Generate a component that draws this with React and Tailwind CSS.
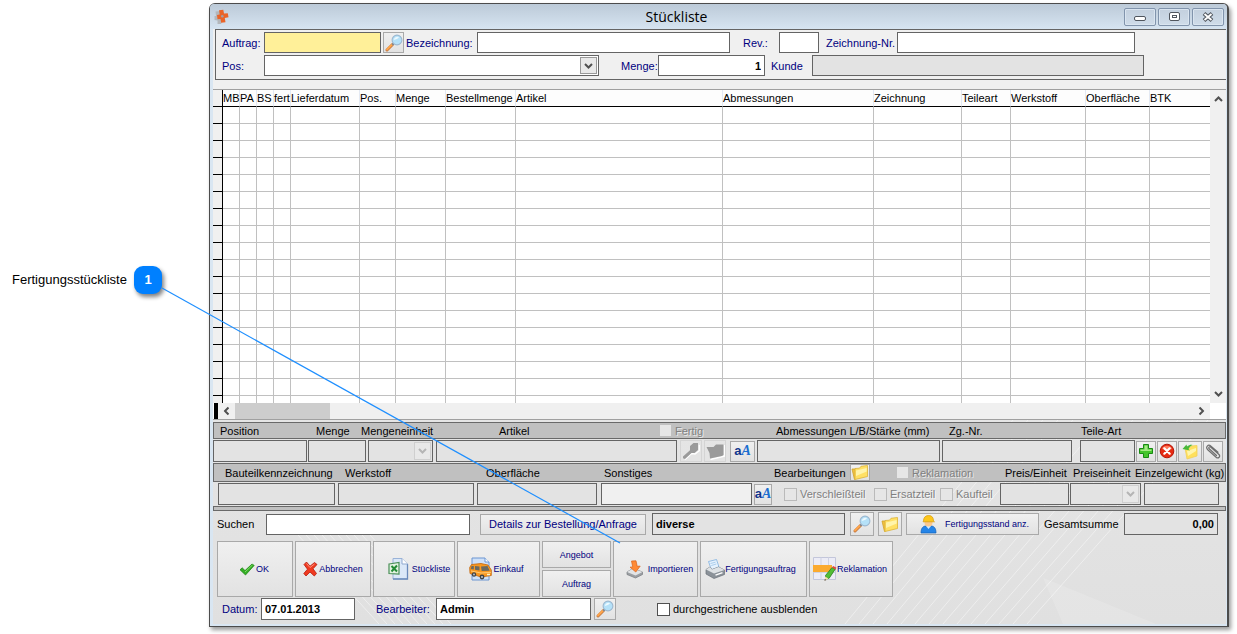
import { useState } from 'react';

const columns = [
  { label: 'MB', width: 'w-[17px]' },
  { label: 'PA', width: 'w-[17px]' },
  { label: 'BS', width: 'w-[17px]' },
  { label: 'fert', width: 'w-[17px]' },
  { label: 'Lieferdatum', width: 'w-[69px]' },
  { label: 'Pos.', width: 'w-[36px]' },
  { label: 'Menge', width: 'w-[50px]' },
  { label: 'Bestellmenge', width: 'w-[70px]' },
  { label: 'Artikel', width: 'w-[207px]' },
  { label: 'Abmessungen', width: 'w-[151px]' },
  { label: 'Zeichnung', width: 'w-[88px]' },
  { label: 'Teileart', width: 'w-[49px]' },
  { label: 'Werkstoff', width: 'w-[75px]' },
  { label: 'Oberfläche', width: 'w-[64px]' },
  { label: 'BTK', width: '' },
];

const rows = Array.from({ length: 17 }, (_, i) => i);

const MagnifierIcon = () => (
  <svg width="18" height="18" viewBox="0 0 18 18" aria-hidden="true">
    <path d="M2 16 7.500 10.500" stroke="#c47a44" strokeWidth="3" strokeLinecap="round" />
    <path d="M2 15.500 7 10.500" stroke="#ffa54a" strokeWidth="1.800" strokeLinecap="round" />
    <path d="m7.200 10.800 1.800-1.800" stroke="#7d8894" strokeWidth="1.800" />
    <circle cx="12" cy="6" r="4.900" fill="#b5e1f8" stroke="#9db8d0" strokeWidth="1.100" />
    <path d="M8.700 6a3.500 3.500 0 0 1 5.300-2.700C13 5 11 5.500 8.700 6Z" fill="#ecf9ff" />
  </svg>
);

const FolderIcon = () => (
  <svg width="18" height="17" viewBox="0 0 18 17" aria-hidden="true">
    <path d="M1 5h3.500L5.500 14l-2 1.500Z" fill="#f0c040" stroke="#d1a32a" strokeWidth=".8" />
    <path d="M4 4.500 8.500 4.200 10 2.300l6.500-.8v11L4 15.500Z" fill="#ffe065" stroke="#dcb238" strokeWidth=".8" />
    <path d="M5 6.500 15.700 4v3.500L5 12Z" fill="#fff4ac" />
  </svg>
);

const PlusIcon = () => (
  <svg width="16" height="16" viewBox="0 0 16 16" aria-hidden="true">
    <path d="M5.500 1.500h5v4h4v5h-4v4h-5v-4h-4v-5h4Z" fill="#45c52c" stroke="#188a12" />
    <path d="M6.500 2.500h3v4h4v1.500h-11V6.500h4Z" fill="#a5ea85" />
  </svg>
);

const DeleteIcon = () => (
  <svg width="16" height="16" viewBox="0 0 16 16" aria-hidden="true">
    <circle cx="8" cy="8" r="6.800" fill="#e62a12" stroke="#b51708" />
    <path d="M3 6a5.500 5.500 0 0 1 10 0C10 7.500 6 7.500 3 6Z" fill="#ff7a5c" />
    <path d="m5.300 5.300 5.400 5.400m0-5.400-5.400 5.400" stroke="#fff" strokeWidth="2.200" strokeLinecap="round" />
  </svg>
);

const ImportFolderIcon = () => (
  <svg width="18" height="17" viewBox="0 0 18 17" aria-hidden="true">
    <path d="M4 5 9 4.500l1-1.500 6-.5v10.500L6 16Z" fill="#ffe05c" stroke="#f0cf5c" strokeWidth=".8" />
    <path d="M6 8 15 5v3L7 13Z" fill="#fff5ac" />
    <path d="M1.500 6 5.500 1.500l.5 2C8 2 10 1.500 11.500 2 9.500 3 8 4.500 7.500 6l1.500 1.500Z" fill="#48b83a" />
  </svg>
);

const ClipIcon = () => (
  <svg width="17" height="17" viewBox="0 0 17 17" fill="none" aria-hidden="true">
    <path d="M11.500 12.500 4.200 5.800C3 4.700 4.500 3 5.900 4.200l7.800 7c2.300 2.200-.3 4.900-2.600 3L3 7C-.1 4 3.200.8 6 3.200l7 6" stroke="#6e6e6e" strokeWidth="1.200" strokeLinecap="round" />
  </svg>
);

const FontIcon = () => (
  <span className="flex items-end leading-4 font-bold" aria-hidden="true">
    <span className="text-[13px] text-[#12358c]">a</span>
    <span className="font-['Liberation_Serif',serif] text-[14px] text-[#1b6fd0] italic">A</span>
  </span>
);

const CheckIcon = () => (
  <svg width="16" height="13" viewBox="0 0 16 13" aria-hidden="true">
    <path d="M1 6.800 3.200 4.800 6 7.600 13 1l2.200 1.400L6.500 12Z" fill="#35ae24" stroke="#16830f" strokeWidth=".7" />
    <path d="m6 9 7.500-7" stroke="#8be070" strokeWidth=".9" />
  </svg>
);

const CrossIcon = () => (
  <svg width="15" height="16" viewBox="0 0 15 16" aria-hidden="true">
    <path d="M3.500 1 7 5.200 11.500 1.500l2.500 2-4 4.300 3.500 4.700-2.200 2.500-4.300-4L3 15 .8 12.500l3.700-4.300L1 3.500Z" fill="#ef3a20" stroke="#b81c0c" strokeWidth=".8" />
    <path d="m3.500 2.500 3.500 4 4.500-3.500" stroke="#ff917c" fill="none" />
  </svg>
);

const SheetIcon = () => (
  <svg width="21" height="24" viewBox="0 0 21 24" aria-hidden="true">
    <path d="M5 1.500h9l5.500 5.500v15H5Z" fill="#dbe8f8" stroke="#9ab3d8" />
    <path d="M19.500 7v15H5" fill="none" stroke="#6a8abb" strokeWidth="1.300" />
    <path d="M14 1.500V7h5.500" fill="#fff" stroke="#8fa9d0" />
    <path d="m1 7 10-1.500v11.500L1 16.500Z" fill="#e2f2e0" stroke="#4a8f57" strokeWidth="1.200" />
    <path d="m3.500 9 5.500 5.500M9 8.500l-5.500 6" stroke="#238b35" strokeWidth="2" />
  </svg>
);

const VanIcon = () => (
  <svg width="23" height="24" viewBox="0 0 23 24" aria-hidden="true">
    <path d="M3 1h13l4 4v18H3Z" fill="#cfe1f8" stroke="#6c96d2" />
    <path d="M16 1v4h4" fill="#fff" stroke="#6c96d2" />
    <path d="M.7 10.500 2.500 7.500 12 6.500l7 1.500 3.300 5v5.500L12 20 1 16.500Z" fill="#f89820" stroke="#c2640a" strokeWidth=".8" />
    <path d="m2.500 9-.7 3 3 .5V9ZM6 9v3.700l4.500.8V9.500ZM12 9.500l.7 4.500 8-.3L18.500 9Z" fill="#6b6a60" />
    <path d="m2 14 10 2 10-.7" stroke="#ffc873" fill="none" />
    <circle cx="5" cy="17.500" r="2.200" fill="#3f4347" />
    <circle cx="13" cy="20" r="2.400" fill="#3f4347" />
    <circle cx="5" cy="17.500" r=".9" fill="#c4c9ce" />
    <circle cx="13" cy="20" r="1" fill="#c4c9ce" />
    <path d="M18 17.500h3" stroke="#fff4c9" strokeWidth="1.500" />
  </svg>
);

const ImportIcon = () => (
  <svg width="18" height="19" viewBox="0 0 18 19" aria-hidden="true">
    <path d="m1 12 6-3.500L16.500 12v2.500L9.500 18 1 14.500Z" fill="#9b9fa3" stroke="#777b80" strokeWidth=".7" />
    <path d="m1 12 6-3.500L16.500 12 9.500 15.500Z" fill="#e2e4e6" />
    <path d="M5.500 1 10 .8l1.200 5.500 3-.2L9.800 12 4 7.200l2.700-.3Z" fill="#ff8a35" stroke="#d8621a" strokeWidth=".7" />
  </svg>
);

const PrinterIcon = () => (
  <svg width="20" height="20" viewBox="0 0 20 20" aria-hidden="true">
    <path d="m3.500 2.500 8-2 2.500 7.500-7.500 3Z" fill="#e4f1fd" stroke="#7fb0df" strokeWidth=".8" />
    <path d="m5.500 4.500 5-1.300M6.300 6.500l5-1.500" stroke="#9cc4e8" strokeWidth=".8" />
    <path d="m1 10.500 4-2.500 2 2.500 6.500-2.500 6 3v4.500L9 19.500 1 15Z" fill="#8b9299" stroke="#6a7178" strokeWidth=".7" />
    <path d="m1 10.500 4-2.500 2 2.500 6.500-2.500 6 3L9 14.500Z" fill="#dfe3e6" />
    <path d="m10.500 16.200 7-2.500" stroke="#fff" strokeWidth="1.400" />
  </svg>
);

const ComplaintIcon = () => (
  <svg width="24" height="25" viewBox="0 0 24 25" aria-hidden="true">
    <path d="M.5.500h22v22H.5Z" fill="#ececf6" stroke="#c3c6da" />
    <path d="M8 .5v22M15.500.500v22M.5 15.500h22" stroke="#cfd2e2" />
    <path d="M0 8h19v7H0Z" fill="#fbaa30" />
    <path d="m12.500 18.500 6.500-8 3.200 1.700-6 9-3.200 1Z" fill="#52bd36" stroke="#277d1b" strokeWidth=".8" />
    <path d="m19 10.200 1.200-1.200 3.300 1.800-1.200 1.600Z" fill="#e7473c" />
    <path d="m12.300 19.500-.8 4.200 4-2Z" fill="#fae0b0" />
    <path d="m11.800 22-.3 1.800 1.900-.8Z" fill="#333" />
  </svg>
);

const WorkerIcon = () => (
  <svg width="17" height="19" viewBox="0 0 17 19" aria-hidden="true">
    <path d="M1 18c0-5 2-7 5-7h5c3 0 5 2 5 7Z" fill="#2585e8" stroke="#1561b4" strokeWidth=".7" />
    <path d="m6 11 2.500 3L11 11Z" fill="#d7ecff" />
    <circle cx="8.500" cy="7.500" r="4" fill="#fbc88d" />
    <path d="M3.500 6C3.500 2.500 5.500.500 8.700.500S13.500 2.500 13.500 6l1 .8H3Z" fill="#fdc71c" stroke="#d59b0a" strokeWidth=".7" />
  </svg>
);

const LogoIcon = () => (
  <svg width="15" height="16" viewBox="0 0 15 16" aria-hidden="true">
    <path d="M1.500 2.500 6 2v4l3 .5v4L7 15H3.500v-3.500L.5 11V7h1.500Z" fill="#b4b7bb" />
    <path d="m5 1.200 4.300-.4.700 3.700 3.800-.2.700 4-3.700.7.700 4.200-4.300.5L6.500 10l-3 .2L3 6l2.700-.5Z" fill="#ea6428" />
    <circle cx="8.300" cy="7.200" r="1.300" fill="#a5a0a5" />
  </svg>
);

const GreyKeyIcon = () => (
  <svg width="18" height="18" viewBox="0 0 18 18" className="shrink-0" aria-hidden="true">
    <path d="m3 17.500 6.500-6L13 12l4.500-3.500V3" stroke="#fff" strokeWidth="1.500" fill="none" />
    <path d="m1 14.500 7-6.200V4l3.500-3H16v7l-3.500 3H9.500L3 17l-2-.7Z" fill="#9a9a9a" />
  </svg>
);

const GreyFolderIcon = () => (
  <svg width="19" height="17" viewBox="0 0 19 17" className="shrink-0" aria-hidden="true">
    <path d="M18.500 2v11L4.500 16.500" stroke="#fff" strokeWidth="1.500" fill="none" />
    <path d="M.5 4h7l2.500-2.500h7.500V12l-1.500 1L4 15.500 3.500 10Z" fill="#9a9a9a" />
  </svg>
);

const Chevron = ({ className }) => (
  <svg width="9" height="6" viewBox="0 0 9 6" fill="none" className={className} aria-hidden="true">
    <path d="m1 1 3.500 3.500L8 1" stroke="currentColor" strokeWidth="2" />
  </svg>
);

const Field = ({ className = '', ...props }) => (
  <input
    type="text"
    className={`min-w-0 border border-[#646464] px-[3px] text-[11px] outline-none ${className}`}
    {...props}
  />
);

const ReadField = ({ className = '', ...props }) => (
  <Field readOnly className={`h-[22px] bg-[#e3e3e3] ${className}`} {...props} />
);

const DropDown = ({ className, disabled, ...props }) => (
  <div className={`relative ${className}`}>
    <select
      disabled={disabled}
      className={`h-full w-full appearance-none border border-[#646464] px-1 text-[11px] opacity-100 outline-none ${disabled ? 'bg-[#e3e3e3]' : 'bg-white'}`}
      {...props}
    >
      <option value=""></option>
    </select>
    <span
      className={`pointer-events-none absolute top-0.5 right-0.5 bottom-0.5 flex w-[17px] items-center justify-center border ${
        disabled ? 'border-[#cfcfcf] bg-[#e8e8e8] text-[#b5b5b5]' : 'border-[#999] bg-[#e9e9e9] text-[#505050]'
      }`}
    >
      <Chevron />
    </span>
  </div>
);

const PushButton = ({ className = '', children, ...props }) => (
  <button
    type="button"
    className={`flex shrink-0 items-center justify-center border border-[#a9a9a9] bg-linear-to-b from-[#f0f0f0] to-[#e2e2e2] whitespace-nowrap text-[#000080] ${className}`}
    {...props}
  >
    {children}
  </button>
);

const DisabledCheck = ({ label, boxClass = 'border-[#bababa]', className = '' }) => (
  <label className={`flex items-center gap-[3px] whitespace-nowrap text-[#808080] [text-shadow:1px_1px_0_#ffffffb0] ${className}`}>
    <input type="checkbox" disabled className={`size-[13px] shrink-0 appearance-none border bg-[#e6e6e6] ${boxClass}`} />
    {label}
  </label>
);

const CaptionButton = ({ label, children }) => (
  <button
    type="button"
    aria-label={label}
    className="flex h-[18px] w-8 items-center justify-center rounded-xs border border-[#8194ac] bg-linear-to-b from-[#c3d0de] to-[#cfdce9] shadow-[inset_0_0_0_1px_#dae5f0]"
  >
    {children}
  </button>
);

// faint diagonal rays on the form background
const Rays = () => (
  <svg className="pointer-events-none absolute inset-0 h-full w-full" viewBox="0 0 1013 207" preserveAspectRatio="none" aria-hidden="true">
    <g stroke="#fff" strokeOpacity=".45" strokeWidth="1">
      {Array.from({ length: 14 }, (_, i) => (
        <line key={i} x1={632 + i * 14} y1="207" x2={800 + i * 15} y2="0" />
      ))}
      {Array.from({ length: 10 }, (_, i) => (
        <line key={i} x1={70 + i * 8} y1="100" x2={166 + i * 8} y2="207" />
      ))}
    </g>
    <path d="M830 160 943 207H850Z" fill="#fff" fillOpacity=".15" />
  </svg>
);

const TitleBar = () => (
  <header className="flex h-[25px] items-center gap-0.5 rounded-t bg-linear-to-b from-[#bccad8] to-[#d6e4f1] pr-[3px] pl-1">
    <LogoIcon />
    <h1 className="flex-1 text-center font-['Open_Sans',sans-serif] text-[14px] text-black">Stückliste</h1>
    <CaptionButton label="Minimieren">
      <span className="mt-1 h-[5px] w-3 rounded-xs border border-[#50565e] bg-white" />
    </CaptionButton>
    <CaptionButton label="Maximieren">
      <span className="flex h-[9px] w-[11px] items-center justify-center rounded-xs border border-[#50565e] bg-white">
        <span className="h-[3px] w-[5px] border border-[#50565e]" />
      </span>
    </CaptionButton>
    <CaptionButton label="Schließen">
      <svg width="12" height="10" viewBox="0 0 12 10" aria-hidden="true">
        <path d="m2 1.500 8 7m0-7-8 7" stroke="#50565e" strokeWidth="4" />
        <path d="m2.500 2 7 6m0-6-7 6" stroke="#fff" strokeWidth="1.800" />
      </svg>
    </CaptionButton>
  </header>
);

const OrderForm = () => (
  <section className="ml-0.5 border-y border-l border-[#646464] bg-[#f0f0f0] pt-0.5 pb-[3px] pl-1.5 text-[#000080]">
    <div className="flex items-center pr-[91px]">
      <label htmlFor="auftrag" className="w-[42px]">Auftrag:</label>
      <Field id="auftrag" className="h-[21px] w-[117px] bg-[#fff099]" />
      <PushButton aria-label="Auftrag suchen" className="mx-0.5 size-[21px]"><MagnifierIcon /></PushButton>
      <label htmlFor="bezeichnung" className="w-[71px]">Bezeichnung:</label>
      <Field id="bezeichnung" className="h-[21px] flex-1 bg-white" />
      <label htmlFor="rev" className="ml-[13px] w-[36px]">Rev.:</label>
      <Field id="rev" className="h-[21px] w-10 bg-white" />
      <label htmlFor="zeichnung" className="ml-[7px] w-[71px] whitespace-nowrap">Zeichnung-Nr.</label>
      <Field id="zeichnung" className="h-[21px] w-[238px] bg-white" />
    </div>
    <div className="mt-0.5 flex items-center pr-[82px]">
      <label htmlFor="pos" className="w-[42px]">Pos:</label>
      <DropDown id="pos" className="h-[21px] w-[335px]" />
      <label htmlFor="menge" className="ml-[22px] w-[37px]">Menge:</label>
      <Field id="menge" defaultValue="1" className="h-[21px] w-[107px] bg-white text-right font-bold text-black" />
      <label htmlFor="kunde" className="ml-1.5 w-[41px]">Kunde</label>
      <Field id="kunde" readOnly className="h-[21px] flex-1 bg-[#e3e3e3]" />
    </div>
  </section>
);

const PartsTable = () => (
  <section className="relative mt-[9px] border-y border-[#a0a0a0] bg-white">
    <div className="flex">
      <div className="min-w-0 flex-1 overflow-hidden">
        <table className="w-full table-fixed border-separate border-spacing-0">
          <thead>
            <tr className="h-[17px]">
              <th className="w-[10px] border-r border-b border-black bg-[#f0f0f0] p-0"></th>
              {columns.map((col) => (
                <th
                  key={col.label}
                  className={`border-r border-b border-r-[#e3e9f3] border-b-black bg-[#fdfdfd] p-0 text-left leading-4 font-normal whitespace-nowrap last:border-r-0 ${col.width}`}
                >
                  {col.label}
                </th>
              ))}
            </tr>
          </thead>
          <tbody>
            {rows.map((row) => (
              <tr key={row} className="h-[17px]">
                <td className="border-r border-b border-black bg-[#f0f0f0] p-0"></td>
                {columns.map((col) => (
                  <td key={col.label} className="border-r border-b border-[#c0c0c0] p-0 last:border-r-0"></td>
                ))}
              </tr>
            ))}
            <tr className="h-[7px]">
              <td className="border-r border-black bg-[#f0f0f0] p-0"></td>
              {columns.map((col) => (
                <td key={col.label} className="border-r border-[#c0c0c0] p-0 last:border-r-0"></td>
              ))}
            </tr>
          </tbody>
        </table>
      </div>
      <div className="flex w-4 flex-col items-center justify-between bg-[#f0f0f0] py-1.5 text-[#505050]">
        <Chevron className="rotate-180" />
        <Chevron />
      </div>
    </div>
    <div className="flex h-4 pr-4 pl-px">
      <span className="w-1 bg-black" />
      <div className="flex flex-1 items-center bg-[#f0f0f0] pr-1 text-[#505050]">
        <Chevron className="mx-1 rotate-90" />
        <span className="h-full w-[95px] bg-[#cdcdcd]" />
        <Chevron className="ml-auto -rotate-90" />
      </div>
    </div>
  </section>
);

const bar = 'flex items-center border border-[#696969] bg-[#c0c0c0] whitespace-nowrap';

const PartDetails = () => (
  <section className="relative mt-0.5">
    <div className={`${bar} h-[17px] pl-1.5`}>
      <label htmlFor="d-position" className="w-[96px]">Position</label>
      <label htmlFor="d-menge" className="w-[45px]">Menge</label>
      <label htmlFor="d-einheit" className="w-[138px]">Mengeneinheit</label>
      <label htmlFor="d-artikel" className="flex-1">Artikel</label>
      <DisabledCheck label="Fertig" boxClass="border-[#c0c0c0]" className="w-[117px]" />
      <label htmlFor="d-abm" className="w-[173px]">Abmessungen L/B/Stärke (mm)</label>
      <label htmlFor="d-zg" className="w-[132px]">Zg.-Nr.</label>
      <label htmlFor="d-art" className="w-[144px]">Teile-Art</label>
    </div>
    <div className="flex items-center py-px pr-[3px]">
      <ReadField id="d-position" className="w-[94px]" />
      <ReadField id="d-menge" className="ml-px w-[58px]" />
      <DropDown id="d-einheit" disabled className="mx-0.5 h-[22px] w-[65px]" />
      <ReadField id="d-artikel" className="ml-px flex-1" />
      <button type="button" disabled aria-label="Artikel suchen" className="ml-[3px] flex size-[22px] items-center justify-center border border-[#d4d4d4]"><GreyKeyIcon /></button>
      <button type="button" disabled aria-label="Ordner" className="ml-0.5 flex size-[22px] items-center justify-center border border-[#d4d4d4]"><GreyFolderIcon /></button>
      <PushButton aria-label="Schrift" className="ml-1 h-[21px] w-[25px]"><FontIcon /></PushButton>
      <ReadField id="d-abm" className="ml-0.5 w-[183px]" />
      <ReadField id="d-zg" className="ml-0.5 w-[130px]" />
      <ReadField id="d-art" className="ml-2 w-[55px]" />
      <PushButton aria-label="Hinzufügen" className="ml-px h-[21px] w-5"><PlusIcon /></PushButton>
      <PushButton aria-label="Löschen" className="ml-px h-[21px] w-5"><DeleteIcon /></PushButton>
      <PushButton aria-label="Übernehmen" className="ml-px h-[21px] w-6"><ImportFolderIcon /></PushButton>
      <PushButton aria-label="Anhang" className="ml-px h-[21px] w-5"><ClipIcon /></PushButton>
    </div>
    <div className={`${bar} h-[19px] pl-[11px]`}>
      <label htmlFor="d-btk" className="w-[120px]">Bauteilkennzeichnung</label>
      <label htmlFor="d-werk" className="w-[141px]">Werkstoff</label>
      <label htmlFor="d-ober" className="w-[118px]">Oberfläche</label>
      <label htmlFor="d-sonst" className="flex-1">Sonstiges</label>
      <span className="w-[76px]">Bearbeitungen</span>
      <PushButton aria-label="Bearbeitungen öffnen" className="h-[17px] w-5"><FolderIcon /></PushButton>
      <DisabledCheck label="Reklamation" boxClass="border-[#c0c0c0]" className="ml-[26px] w-[109px]" />
      <label htmlFor="d-preis" className="w-[68px]">Preis/Einheit</label>
      <label htmlFor="d-pe" className="w-[62px]">Preiseinheit</label>
      <label htmlFor="d-gewicht" className="w-[90px]">Einzelgewicht (kg)</label>
    </div>
    <div className="flex items-center py-px pr-[7px] pl-[5px]">
      <ReadField id="d-btk" className="w-[117px]" />
      <ReadField id="d-werk" className="ml-[3px] w-[136px]" />
      <ReadField id="d-ober" className="ml-[3px] w-[120px]" />
      <Field id="d-sonst" className="ml-1 h-[22px] flex-1 bg-[#f0f0f0]" />
      <PushButton aria-label="Schrift" className="ml-0.5 h-[21px] w-[18px]"><FontIcon /></PushButton>
      <DisabledCheck label="Verschleißteil" className="ml-3 w-[90px]" />
      <DisabledCheck label="Ersatzteil" className="w-[66px]" />
      <DisabledCheck label="Kaufteil" className="w-[60px]" />
      <ReadField id="d-preis" className="w-[69px]" />
      <DropDown id="d-pe" disabled className="ml-px h-[22px] w-[71px]" />
      <ReadField id="d-gewicht" className="ml-[3px] w-[75px]" />
    </div>
    <div className="h-[5px] border border-[#696969] bg-[#c0c0c0]" />
  </section>
);

const Footer = () => {
  const [hideStruck, setHideStruck] = useState(false);

  return (
    <section className="relative pt-px pb-1 pl-1">
      <div className="flex items-center pr-2">
        <label htmlFor="suchen" className="w-[49px]">Suchen</label>
        <Field id="suchen" className="h-[21px] w-[204px] bg-white" />
        <PushButton className="mr-1.5 ml-2.5 h-[21px] w-[166px]">Details zur Bestellung/Anfrage</PushButton>
        <ReadField aria-label="Bestellung" defaultValue="diverse" className="flex-1 font-bold" />
        <PushButton aria-label="Bestellung suchen" className="ml-[5px] size-6"><MagnifierIcon /></PushButton>
        <PushButton aria-label="Ordner öffnen" className="mx-1 size-6"><FolderIcon /></PushButton>
        <PushButton className="h-[22px] w-[133px] gap-2 pl-1 text-[9px]">
          <WorkerIcon />
          Fertigungsstand anz.
        </PushButton>
        <label htmlFor="summe" className="ml-[5px] w-20">Gesamtsumme</label>
        <ReadField id="summe" defaultValue="0,00" className="w-[94px] text-right font-bold" />
      </div>
      <div className="mt-[5px] flex h-[56px] gap-0.5 text-[9px]">
        <PushButton className="w-[76px] gap-px pr-0.5"><CheckIcon />OK</PushButton>
        <PushButton className="w-[76px] gap-px"><CrossIcon />Abbrechen</PushButton>
        <PushButton className="w-[82px] gap-[3px] pl-2.5"><SheetIcon />Stückliste</PushButton>
        <PushButton className="w-[83px] gap-px pr-1"><VanIcon />Einkauf</PushButton>
        <div className="flex w-[69px] flex-col gap-0.5">
          <PushButton className="h-[27px]">Angebot</PushButton>
          <PushButton className="h-[27px]">Auftrag</PushButton>
        </div>
        <PushButton className="w-[85px] gap-1 pl-2"><ImportIcon />Importieren</PushButton>
        <PushButton className="w-[107px] pr-1.5"><PrinterIcon />Fertigungsauftrag</PushButton>
        <PushButton className="w-[84px] pr-0.5"><ComplaintIcon />Reklamation</PushButton>
      </div>
      <div className="mt-px flex items-center pl-[5px]">
        <label htmlFor="datum" className="w-[39px] text-[#000080]">Datum:</label>
        <Field id="datum" defaultValue="07.01.2013" className="h-[22px] w-[94px] bg-white font-bold" />
        <label htmlFor="bearbeiter" className="ml-[21px] w-[60px] text-[#000080]">Bearbeiter:</label>
        <Field id="bearbeiter" defaultValue="Admin" className="h-[22px] w-[155px] bg-white font-bold" />
        <PushButton aria-label="Bearbeiter suchen" className="ml-[3px] size-[22px]"><MagnifierIcon /></PushButton>
        <label className="ml-[41px] flex items-center gap-[3px]">
          <input
            type="checkbox"
            checked={hideStruck}
            onChange={(e) => setHideStruck(e.target.checked)}
            className="size-[13px] appearance-none border border-[#505050] bg-white checked:bg-[#505050]"
          />
          durchgestrichene ausblenden
        </label>
      </div>
    </section>
  );
};

const App = () => {
  return (
    <div className="relative flex bg-white pt-[3px] pr-2 pb-2 font-['Liberation_Sans',Arial,sans-serif] text-[11px] leading-[14px] text-black">
      <aside className="flex w-[209px] shrink-0 items-start pt-[263px] pl-3">
        <div className="flex items-center gap-[5px]">
          <span className="w-[117px] text-[13px]">Fertigungsstückliste</span>
          <span className="flex size-7 items-center justify-center rounded-[9px] bg-[#0080ff] text-[13px] font-bold text-white shadow-[2px_3px_4px_#0000007f]">1</span>
        </div>
      </aside>
      <main className="min-w-0 flex-1 rounded-t-md border border-r-2 border-[#4c4c4c] bg-[#d9e6f2] shadow-[2px_3px_4px_#00000066]">
        <TitleBar />
        <div className="relative mr-px mb-0.5 ml-[3px] bg-[#f0f0f0]">
          <OrderForm />
          <PartsTable />
          <div className="relative overflow-hidden bg-linear-to-b from-[#e5e5e5] to-[#e0e0e0]">
            <Rays />
            <PartDetails />
            <Footer />
          </div>
        </div>
      </main>
      <svg className="pointer-events-none absolute top-0 left-0 h-[560px] w-[640px]" aria-hidden="true">
        <line x1="162" y1="288" x2="620" y2="543" stroke="#1e8fff" strokeWidth="1.200" />
      </svg>
    </div>
  );
};

export default App;
